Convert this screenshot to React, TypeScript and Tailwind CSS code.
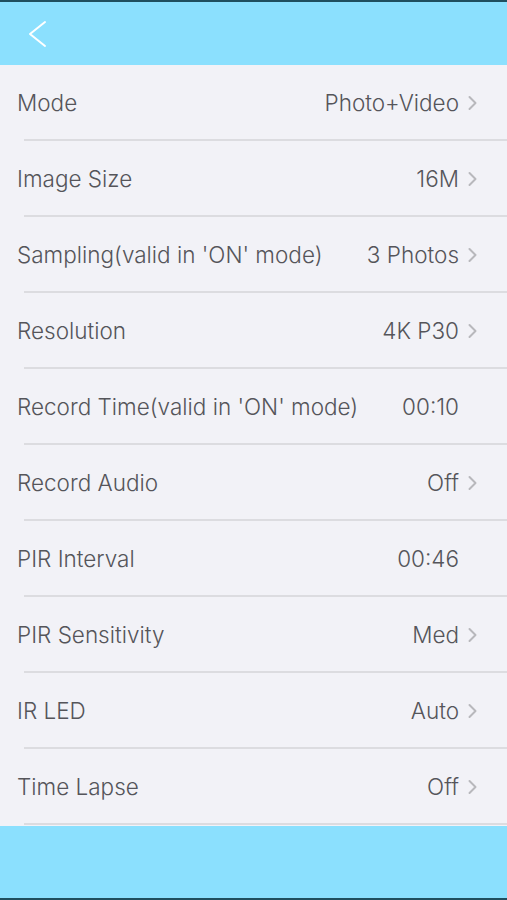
const rows: { label: string; value: string; arrow: boolean }[] = [
  { label: "Mode", value: "Photo+Video", arrow: true },
  { label: "Image Size", value: "16M", arrow: true },
  { label: "Sampling(valid in 'ON' mode)", value: "3 Photos", arrow: true },
  { label: "Resolution", value: "4K P30", arrow: true },
  { label: "Record Time(valid in 'ON' mode)", value: "00:10", arrow: false },
  { label: "Record Audio", value: "Off", arrow: true },
  { label: "PIR Interval", value: "00:46", arrow: false },
  { label: "PIR Sensitivity", value: "Med", arrow: true },
  { label: "IR LED", value: "Auto", arrow: true },
  { label: "Time Lapse", value: "Off", arrow: true },
];

function Chevron() {
  return (
    <svg width="12" height="18" viewBox="0 0 12 18" className="shrink-0">
      <path d="M2.5 3 L8.5 9 L2.5 15" fill="none" stroke="#b8b8bc" strokeWidth="2" strokeLinecap="round" strokeLinejoin="round" />
    </svg>
  );
}

function Row({ label, value, arrow }: { label: string; value: string; arrow: boolean }) {
  return (
    <div className="h-[76px] flex flex-col">
      <div className="flex-1 flex items-center justify-between pl-[17px] pr-[28px] pt-[2px]">
        <span className="text-[22.5px] font-light text-[#55555a] whitespace-nowrap">{label}</span>
        <div className="flex items-center gap-[8px]">
          <span className="text-[22.5px] font-light text-[#55555a] whitespace-nowrap">{value}</span>
          {arrow ? <Chevron /> : <span className="w-[12px]" />}
        </div>
      </div>
      <div className="ml-[24px] h-[2px] bg-[#dcdce0]" />
    </div>
  );
}

export default function App() {
  return (
    <div className="w-[507px] h-[900px] flex flex-col bg-[#f2f2f7]" style={{ fontFamily: 'Inter, "Liberation Sans", sans-serif' }}>
      <div className="h-[2px] bg-[#1f4f5f]" />
      <header className="h-[63px] bg-[#8be0fe] flex items-center pl-[26px]">
        <svg width="22" height="28" viewBox="0 0 22 28">
          <path d="M19 2 L4 14 L19 26" fill="none" stroke="#ffffff" strokeWidth="2" strokeLinecap="round" strokeLinejoin="round" />
        </svg>
      </header>
      <main className="flex-1 flex flex-col">
        {rows.map((r) => (
          <Row key={r.label} {...r} />
        ))}
      </main>
      <footer className="h-[72px] bg-[#8be0fe]" />
      <div className="h-[2px] bg-[#1f4f5f]" />
    </div>
  );
}
